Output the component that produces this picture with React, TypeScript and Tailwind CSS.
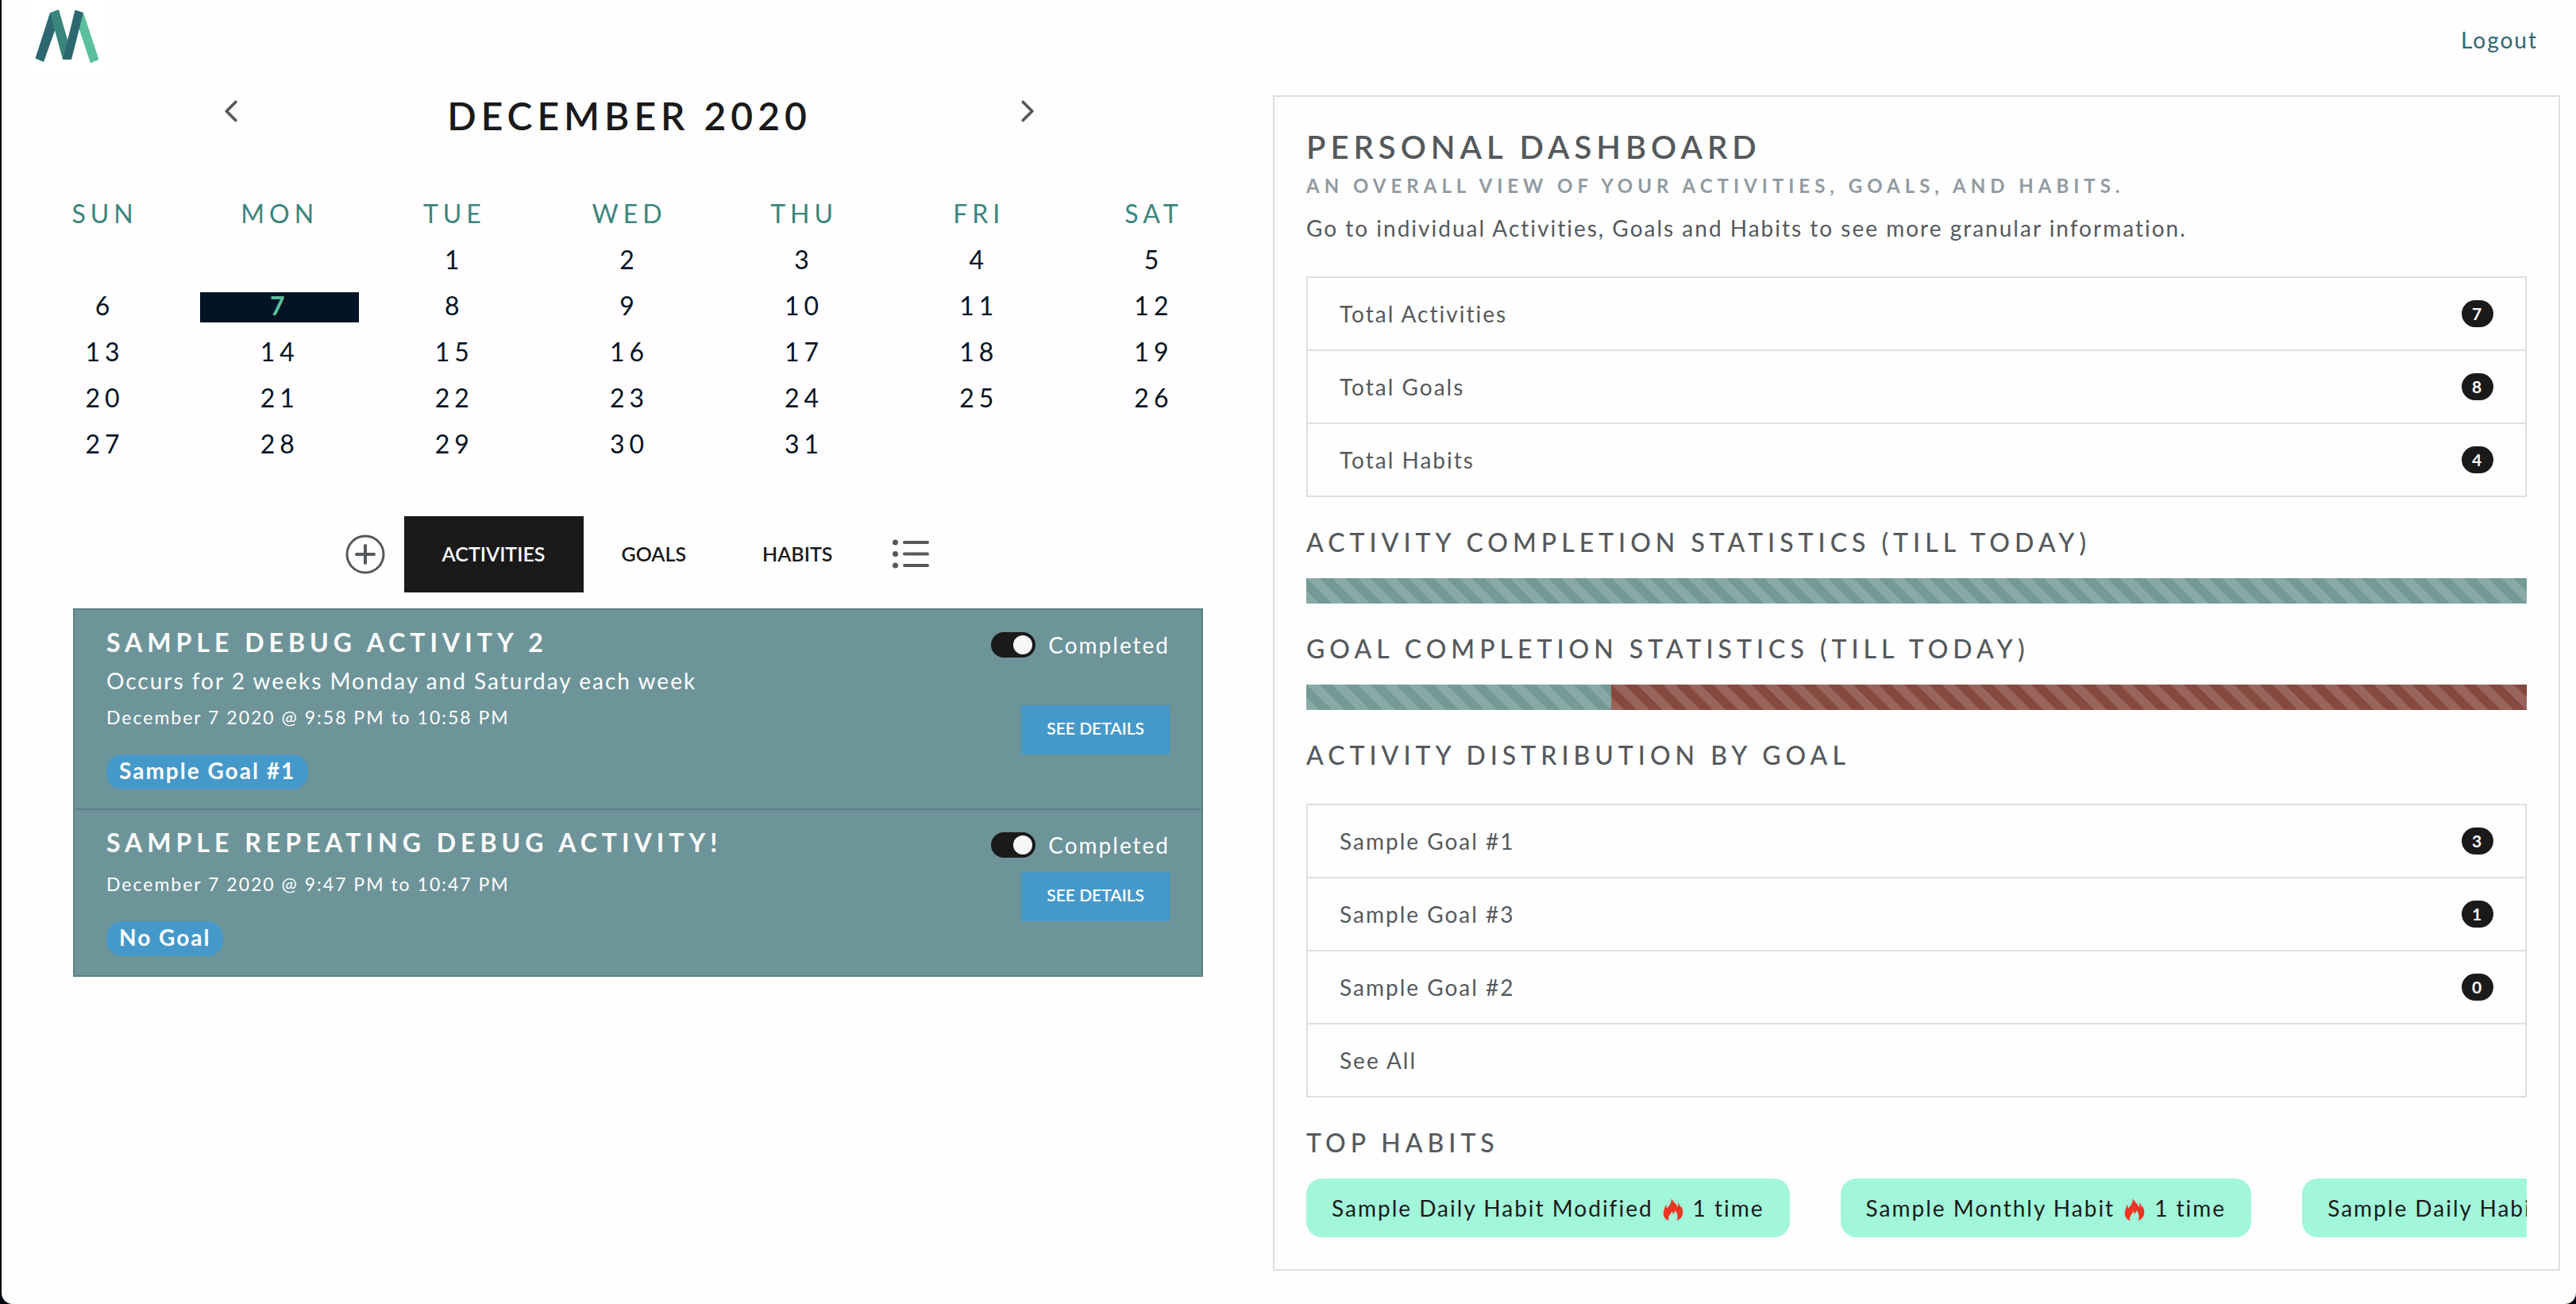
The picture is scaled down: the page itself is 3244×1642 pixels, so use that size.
import { useState } from "react";
import { FiChevronLeft, FiChevronRight } from "react-icons/fi";

const DAYS = ["SUN", "MON", "TUE", "WED", "THU", "FRI", "SAT"];
const FIRST_WEEKDAY = 2;
const DAYS_IN_MONTH = 31;
const TABS = ["ACTIVITIES", "GOALS", "HABITS"];

const ACTIVITIES = [
  {
    id: 1,
    title: "SAMPLE DEBUG ACTIVITY 2",
    description: "Occurs for 2 weeks Monday and Saturday each week",
    time: "December 7 2020 @ 9:58 PM to 10:58 PM",
    goal: "Sample Goal #1",
  },
  {
    id: 2,
    title: "SAMPLE REPEATING DEBUG ACTIVITY!",
    description: "",
    time: "December 7 2020 @ 9:47 PM to 10:47 PM",
    goal: "No Goal",
  },
];

const TOTALS = [
  { label: "Total Activities", count: 7 },
  { label: "Total Goals", count: 8 },
  { label: "Total Habits", count: 4 },
];

const DISTRIBUTION = [
  { label: "Sample Goal #1", count: 3 },
  { label: "Sample Goal #3", count: 1 },
  { label: "Sample Goal #2", count: 0 },
  { label: "See All" },
];

const HABITS = [
  { name: "Sample Daily Habit Modified", times: "1 time" },
  { name: "Sample Monthly Habit", times: "1 time" },
  { name: "Sample Daily Habit", times: "1 time" },
];

const stripes =
  "bg-[linear-gradient(45deg,rgba(255,255,255,0.15)_25%,transparent_25%,transparent_50%,rgba(255,255,255,0.15)_50%,rgba(255,255,255,0.15)_75%,transparent_75%,transparent)] bg-[length:32px_32px]";

function Logo() {
  return (
    <svg width="100" height="98" viewBox="0 0 100 98" className="bg-white" aria-hidden="true">
      <path d="M29 15 L37 32 L21 77 L10.500 72.500 Z" fill="#2d6870" />
      <path d="M29 15 L40 11 L51 49 L48 74 L45 74 Z" fill="#3a857d" />
      <path d="M71 15 L90.500 74 L80 78.500 L65.500 35 Z" fill="#5abf9f" />
      <path d="M60.500 11.500 L71 15 L56 74 L45 74 Z" fill="#2d6870" />
    </svg>
  );
}

function FlameIcon() {
  return (
    <svg width="26" height="28" viewBox="0 0 26 28" className="mx-3 mt-1 shrink-0" aria-hidden="true">
      <path
        fill="#ee3524"
        d="M10.800 0 C12 4 18 6.500 18.300 11.500 C19.300 10 19.500 8 19 5 C20.800 7.500 21.800 9 22.500 11.500 C23.200 10.800 23.400 10 23.400 9 C24 12 25.500 14.500 25.200 18.500 C25 23 22 26.500 17.500 28 C19.500 24 18.500 19 15.800 15 C15.500 17 14.500 18.300 12.500 20 C12.800 18.500 12.400 17.200 11.500 16 C11 18.500 8.500 20.500 7.500 23 C6.800 25 7 26.500 7.700 28 C3 26.500 .5 22.500 .8 18.500 C1 14.500 3 11.500 3.500 7.500 C4.300 9 4.800 10.500 5 12.500 C8.500 9.500 11 5 10.800 0 Z"
      />
    </svg>
  );
}

function Calendar() {
  const [selected, setSelected] = useState(7);
  const blanks = Array.from({ length: FIRST_WEEKDAY });
  const trailing = Array.from({ length: 2 });

  return (
    <section className="pr-[50px] pl-[30px]">
      <div className="flex h-20 items-center justify-between px-[236px]">
        <button type="button" aria-label="Previous month" className="text-[#55595c]">
          <FiChevronLeft size={46} />
        </button>
        <h2 className="pt-3 text-[48px] leading-[56px] font-semibold tracking-[6px] text-[#1a1a1a]">DECEMBER 2020</h2>
        <button type="button" aria-label="Next month" className="text-[#55595c]">
          <FiChevronRight size={46} />
        </button>
      </div>
      <div className="mt-[72px] grid grid-cols-7 gap-5 text-center text-[32px] leading-[34px] tracking-[6px]">
        {DAYS.map((d) => (
          <div key={d} className="bg-[#fffdfe] pb-1 text-[#3a857d]">
            {d}
          </div>
        ))}
        {blanks.map((_, i) => (
          <div key={`b${i}`} className="bg-[#fffdfe]" />
        ))}
        {Array.from({ length: DAYS_IN_MONTH }, (_, i) => i + 1).map((day) => (
          <button
            key={day}
            type="button"
            onClick={() => setSelected(day)}
            className={
              day === selected
                ? "bg-[#031424] pb-1 font-bold tracking-[6px] text-[#5abf9f]"
                : "bg-[#fffdfe] pb-1 tracking-[6px] text-[#031424]"
            }
          >
            {day}
          </button>
        ))}
        {trailing.map((_, i) => (
          <div key={`t${i}`} className="bg-[#fffdfe]" />
        ))}
      </div>
    </section>
  );
}

function TabBar() {
  const [active, setActive] = useState("ACTIVITIES");
  return (
    <nav className="mt-[70px] flex items-center justify-center tracking-normal">
      <button type="button" aria-label="Add" className="mr-6 text-[#55595c]">
        <svg width="50" height="50" viewBox="0 0 50 50" fill="none" stroke="currentColor" strokeWidth="3">
          <circle cx="25" cy="25" r="23" />
          <path d="M25 14v22M14 25h22" strokeWidth="4" strokeLinecap="round" />
        </svg>
      </button>
      {TABS.map((tab) => (
        <button
          key={tab}
          type="button"
          onClick={() => setActive(tab)}
          className={
            tab === active
              ? "h-24 bg-[#1a1a1a] px-12 text-[25px] font-semibold tracking-normal text-white"
              : "h-24 px-12 text-[25px] font-semibold tracking-normal text-[#1a1a1a]"
          }
        >
          {tab}
        </button>
      ))}
      <button type="button" aria-label="List view" className="ml-7 text-[#55595c]">
        <svg width="46" height="38" viewBox="0 0 46 38" fill="currentColor">
          <circle cx="3.500" cy="4" r="3.500" />
          <circle cx="3.500" cy="18.500" r="3.500" />
          <circle cx="3.500" cy="33" r="3.500" />
          <rect x="13" y="2" width="33" height="4" rx="2" />
          <rect x="13" y="16.500" width="33" height="4" rx="2" />
          <rect x="13" y="31" width="33" height="4" rx="2" />
        </svg>
      </button>
    </nav>
  );
}

function ActivityItem({ activity }: { activity: (typeof ACTIVITIES)[number] }) {
  const [done, setDone] = useState(true);
  const id = `completed-${activity.id}`;

  return (
    <li className="flex justify-between border-b-2 border-[#5d7f87] px-10 pt-[22px] pb-6 last:border-b-0">
      <div className="flex flex-col items-start">
        <h5 className="text-[32px] leading-[38px] font-bold tracking-[6px]">{activity.title}</h5>
        <p className="mt-2 text-[28px] leading-[42px]">{activity.description}</p>
        <small className="mt-1 text-[23px] leading-[42px]">{activity.time}</small>
        <span className="mt-[26px] rounded-[20px] bg-[#4599ca] px-4 pb-1 text-[28px] leading-[40px] font-bold">
          {activity.goal}
        </span>
      </div>
      <div className="flex flex-col items-end">
        <div className="flex h-11 items-center gap-4">
          <input
            id={id}
            type="checkbox"
            role="switch"
            checked={done}
            onChange={(e) => setDone(e.target.checked)}
            className="h-8 w-14 appearance-none rounded-full bg-[#adb5bd] p-1 before:block before:size-6 before:rounded-full before:bg-[#f7f7f9] checked:bg-[#1a1a1a] checked:before:ml-6"
          />
          <label htmlFor={id} className="text-[28px] leading-[42px]">
            Completed
          </label>
        </div>
        <button
          type="button"
          className={
            activity.description
              ? "mt-[54px] h-[62px] bg-[#4599ca] px-8 pb-1 text-[21px] font-semibold tracking-normal"
              : "mt-3 h-[62px] bg-[#4599ca] px-8 pb-1 text-[21px] font-semibold tracking-normal"
          }
        >
          SEE DETAILS
        </button>
      </div>
    </li>
  );
}

function CountList({ items }: { items: { label: string; count?: number }[] }) {
  return (
    <ul className="divide-y-2 divide-[#dfdfdf] border-2 border-[#dfdfdf]">
      {items.map(({ label, count }) => (
        <li key={label} className="flex items-center justify-between px-10 py-6 leading-[42px]">
          {count === undefined ? <a href="#all">{label}</a> : <span>{label}</span>}
          {count !== undefined && (
            <span className="h-[34px] min-w-10 rounded-[20px] bg-[#1a1a1a] px-3 text-center text-[21px] leading-[34px] font-bold text-white">
              {count}
            </span>
          )}
        </li>
      ))}
    </ul>
  );
}

function Heading({ children }: { children: string }) {
  return <h4 className="pb-1 text-[32px] leading-[34px] font-medium tracking-[6px]">{children}</h4>;
}

function ProgressBar({ done }: { done: number }) {
  return (
    <div className="mt-6 mb-10 flex h-8">
      <div className={`bg-[#749a96] ${stripes}`} style={{ width: `${done}%` }} />
      <div className={`flex-1 bg-[#86493f] ${stripes}`} />
    </div>
  );
}

export default function App() {
  return (
    <div className="min-h-screen bg-[#02060f] pl-[2px] font-['Lato',sans-serif] text-[28px] tracking-[2px] text-[#55595c]">
      <div className="min-h-screen rounded-b-[14px] bg-[#fefefe]">
        <header className="flex h-[100px] items-center justify-between bg-[#fffdfe] pr-12 pl-8">
          <a href="#home" aria-label="Home">
            <Logo />
          </a>
          <a href="#logout" className="text-[#2d6870]">
            Logout
          </a>
        </header>
        <main className="flex items-start">
          <div className="min-w-0 flex-1">
            <Calendar />
            <TabBar />
            <ul className="mt-5 mr-[88px] ml-[90px] border-2 border-[#5d7f87] bg-[#6d9499] text-white">
              {ACTIVITIES.map((a) => (
                <ActivityItem key={a.id} activity={a} />
              ))}
            </ul>
          </div>
          <aside className="mt-5 mr-5 w-1/2 min-w-0 border-2 border-[#dfdfdf] px-10 py-10">
            <h3 className="text-[40px] leading-[46px] font-semibold tracking-[6px]">PERSONAL DASHBOARD</h3>
            <h6 className="mt-2 text-[24px] leading-[36px] font-bold tracking-[6px] text-[#919aa1]">
              AN OVERALL VIEW OF YOUR ACTIVITIES, GOALS, AND HABITS.
            </h6>
            <p className="mt-[14px] mb-10 leading-[42px]">
              Go to individual Activities, Goals and Habits to see more granular information.
            </p>
            <CountList items={TOTALS} />
            <div className="mt-10">
              <Heading>ACTIVITY COMPLETION STATISTICS (TILL TODAY)</Heading>
              <ProgressBar done={100} />
              <Heading>GOAL COMPLETION STATISTICS (TILL TODAY)</Heading>
              <ProgressBar done={25} />
              <Heading>ACTIVITY DISTRIBUTION BY GOAL</Heading>
            </div>
            <div className="my-10">
              <CountList items={DISTRIBUTION} />
            </div>
            <Heading>TOP HABITS</Heading>
            <div className="mt-6 flex gap-16 overflow-hidden">
              {HABITS.map((h) => (
                <div
                  key={h.name}
                  className="flex shrink-0 items-center rounded-[20px] bg-[#a2f6d9] px-8 py-4 leading-[42px] text-[#1a1a1a]"
                >
                  {h.name}
                  <FlameIcon />
                  {h.times}
                </div>
              ))}
            </div>
          </aside>
        </main>
      </div>
    </div>
  );
}
